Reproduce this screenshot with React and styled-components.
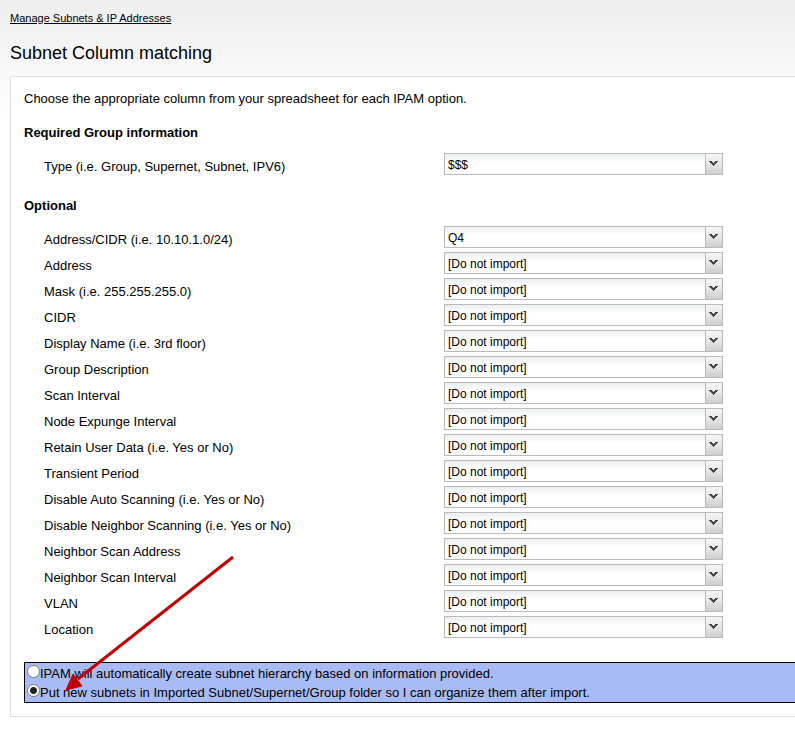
import React from "react";
import styled, { createGlobalStyle } from "styled-components";

const GlobalStyle = createGlobalStyle`
  body {
    margin: 0;
    background: #fff linear-gradient(#eeeeee, #ffffff) no-repeat 0 0 / 100% 120px;
    color: #000;
    font: 13px/18px "Liberation Sans", Arial, sans-serif;
  }
`;

const Page = styled.main`
  padding: 10px 0 16px 10px;
`;

const Breadcrumb = styled.nav`
  font-size: 11px;
  line-height: 16px;
`;

const BreadcrumbLink = styled.a`
  color: #000;
  text-decoration: underline;
`;

const Title = styled.h1`
  margin: 16px 0 12px;
  font-size: 18px;
  line-height: 22px;
  font-weight: 400;
`;

const Panel = styled.form`
  padding: 13px 0 13px 13px;
  border: 1px solid #dfdfde;
  border-right: 0;
  background: #fff;
`;

const Intro = styled.p`
  margin: 0;
`;

const SectionTitle = styled.h2`
  margin: 17px 0 10px;
  font-size: 13px;
  line-height: 20px;
  font-weight: 700;

  ${Intro} + & {
    margin-top: 15px;
  }
`;

const Rows = styled.div`
  padding-left: 20px;
`;

const Row = styled.div`
  display: grid;
  grid-template-columns: minmax(0, 400px) 279px;
  height: 26px;
`;

const FieldLabel = styled.label`
  line-height: 28px;
`;

const SelectBox = styled.div`
  display: grid;
  grid-template: 20px / 1fr 17px;
  height: 22px;
  box-sizing: border-box;
  border: 1px solid #b9babb;
  background: linear-gradient(#eceeee, #ffffff 8px);
`;

const Select = styled.select`
  grid-area: 1 / 1 / 2 / 3;
  appearance: none;
  box-sizing: border-box;
  min-width: 0;
  height: 20px;
  margin: 0;
  padding: 1px 20px 0 3px;
  border: 0;
  border-radius: 0;
  background: transparent;
  color: #000;
  font: 12px/20px "Liberation Sans", Arial, sans-serif;
`;

const Trigger = styled.span`
  grid-area: 1 / 2 / 2 / 3;
  box-sizing: border-box;
  height: 20px;
  padding: 7px 0 0 3px;
  border-left: 1px solid #b9babb;
  background: linear-gradient(#f6f6f6, #e6e6e6 50%, #cecece);
  pointer-events: none;

  svg {
    display: block;
  }
`;

const Options = styled.fieldset`
  position: relative;
  min-width: 0;
  margin: 20px 0 0;
  padding: 1px 2px 0;
  border: 1px solid #000;
  border-right: 0;
  background: #a9bbf5;
`;

const Option = styled.label`
  display: flex;
  align-items: flex-start;
  line-height: 19px;
`;

const Radio = styled.input`
  appearance: none;
  flex: none;
  box-sizing: border-box;
  width: 13px;
  height: 13px;
  margin: 1px 0 0;
  border: 1px solid #7b7b7b;
  border-radius: 50%;
  background: #fff;

  &:checked {
    background: radial-gradient(circle, #222 3px, #fff 4px);
  }
`;

const Arrow = styled.svg`
  position: absolute;
  left: 40px;
  bottom: 10px;
  pointer-events: none;
`;

const optionalFields = [
  "Address/CIDR (i.e. 10.10.1.0/24)",
  "Address",
  "Mask (i.e. 255.255.255.0)",
  "CIDR",
  "Display Name (i.e. 3rd floor)",
  "Group Description",
  "Scan Interval",
  "Node Expunge Interval",
  "Retain User Data (i.e. Yes or No)",
  "Transient Period",
  "Disable Auto Scanning (i.e. Yes or No)",
  "Disable Neighbor Scanning (i.e. Yes or No)",
  "Neighbor Scan Address",
  "Neighbor Scan Interval",
  "VLAN",
  "Location",
];

const columns = ["[Do not import]", "$$$", "Q4"];

function ColumnField({ id, label, value = "[Do not import]" }) {
  return (
    <Row>
      <FieldLabel htmlFor={id}>{label}</FieldLabel>
      <SelectBox>
        <Select id={id} defaultValue={value}>
          {columns.map((column) => (
            <option key={column}>{column}</option>
          ))}
        </Select>
        <Trigger aria-hidden="true">
          <svg width="9" height="6" viewBox="0 0 9 6" shapeRendering="crispEdges">
            <path
              d="M0 0h3v1h1v1h1v-1h1v-1h3v1h-1v1h-1v1h-1v1h-1v1h-1v-1h-1v-1h-1v-1h-1v-1h-1z"
              fill="#484848"
            />
          </svg>
        </Trigger>
      </SelectBox>
    </Row>
  );
}

export default function App() {
  return (
    <>
      <GlobalStyle />
      <Page>
        <Breadcrumb>
          <BreadcrumbLink href="#subnets">Manage Subnets &amp; IP Addresses</BreadcrumbLink>
        </Breadcrumb>
        <Title>Subnet Column matching</Title>
        <Panel>
          <Intro>Choose the appropriate column from your spreadsheet for each IPAM option.</Intro>
          <SectionTitle>Required Group information</SectionTitle>
          <Rows>
            <ColumnField id="type" label="Type (i.e. Group, Supernet, Subnet, IPV6)" value="$$$" />
          </Rows>
          <SectionTitle>Optional</SectionTitle>
          <Rows>
            {optionalFields.map((label, index) => (
              <ColumnField
                key={label}
                id={`optional-${index}`}
                label={label}
                value={index === 0 ? "Q4" : undefined}
              />
            ))}
          </Rows>
          <Options aria-label="Subnet hierarchy">
            <Option>
              <Radio type="radio" name="hierarchy" value="automatic" />
              IPAM will automatically create subnet hierarchy based on information provided.
            </Option>
            <Option>
              <Radio type="radio" name="hierarchy" value="imported" defaultChecked />
              Put new subnets in Imported Subnet/Supernet/Group folder so I can organize them after import.
            </Option>
            <Arrow width="172" height="138" viewBox="0 0 172 138" aria-hidden="true">
              <path d="M168 3L13 125" stroke="#c00000" strokeWidth="3" />
              <path d="M1 136L8 120L17 132Z" fill="#c00000" stroke="#c00000" />
            </Arrow>
          </Options>
        </Panel>
      </Page>
    </>
  );
}
